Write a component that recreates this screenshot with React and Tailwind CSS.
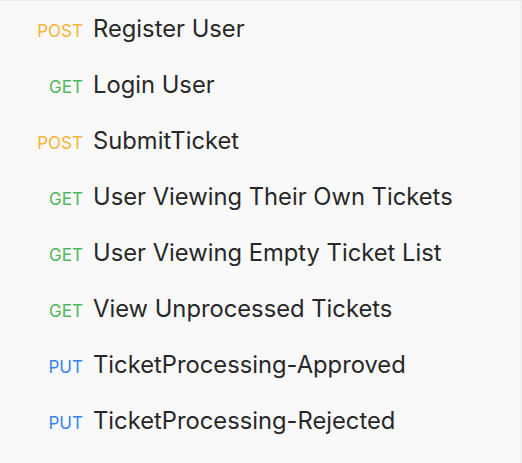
import React from "react";

const requests = [
  { method: "POST", name: "Register User" },
  { method: "GET", name: "Login User" },
  { method: "POST", name: "SubmitTicket" },
  { method: "GET", name: "User Viewing Their Own Tickets" },
  { method: "GET", name: "User Viewing Empty Ticket List" },
  { method: "GET", name: "View Unprocessed Tickets" },
  { method: "PUT", name: "TicketProcessing-Approved" },
  { method: "PUT", name: "TicketProcessing-Rejected" },
];

const methodColor = {
  POST: "text-[#f5b437]",
  GET: "text-[#4cb85c]",
  PUT: "text-[#3b82f0]",
};

export default function App() {
  return (
    <div
      className="w-[522px] h-[463px] bg-[#f9f9f9] border-t border-[#ebebeb] flex"
      style={{ fontFamily: "Inter, 'Noto Sans', sans-serif" }}
    >
      <div className="flex-1 flex flex-col">
        {requests.map((r, i) => (
          <div key={i} className="h-[56px] flex items-center">
            <div className="flex items-baseline">
              <span className={`w-[83px] text-right text-[17px] ${methodColor[r.method]}`}>
                {r.method}
              </span>
              <span className="ml-[10px] text-[23.75px] text-[#282828]">{r.name}</span>
            </div>
          </div>
        ))}
      </div>
      <div className="w-[2px] bg-[#f0f0f0]" />
    </div>
  );
}
